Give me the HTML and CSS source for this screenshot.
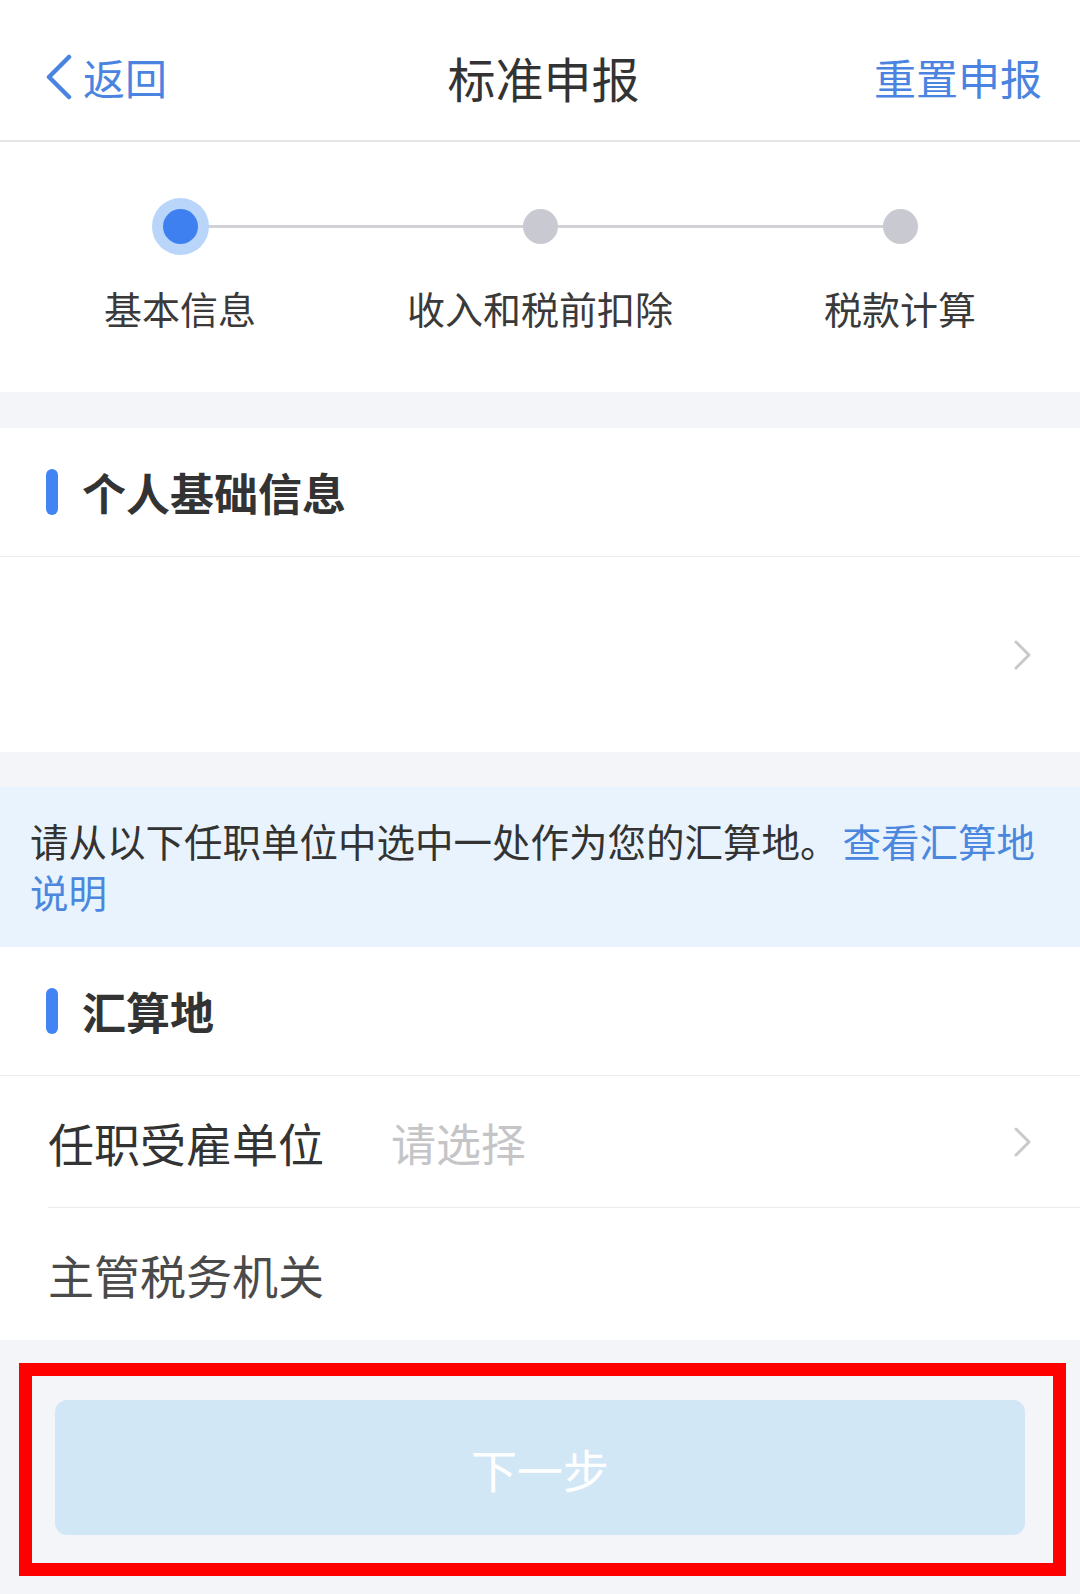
FILE: index.html
```html
<!DOCTYPE html>
<html lang="zh-CN">
<head>
    <meta charset="UTF-8">
    <meta name="viewport" content="width=device-width, initial-scale=1.0">
    <title>标准申报</title>
    <link rel="stylesheet" href="styles.css">
</head>
<body>
    <header class="nav">
        <a class="nav-back" href="#">
            <svg width="28" height="46" viewBox="0 0 28 46"><polyline points="24,3 4,23 24,43" fill="none" stroke="#4a84e0" stroke-width="4.5" stroke-linecap="round" stroke-linejoin="round"/></svg>
            <span>返回</span>
        </a>
        <h1 class="nav-title">标准申报</h1>
        <a class="nav-action" href="#">重置申报</a>
    </header>

    <div class="steps">
        <div class="step active">
            <div class="step-dot"><span></span></div>
            <p>基本信息</p>
        </div>
        <div class="step">
            <div class="step-dot"><span></span></div>
            <p>收入和税前扣除</p>
        </div>
        <div class="step">
            <div class="step-dot"><span></span></div>
            <p>税款计算</p>
        </div>
    </div>

    <section class="card">
        <h2 class="card-title">个人基础信息</h2>
        <div class="row row-empty">
            <svg class="arrow" width="20" height="32" viewBox="0 0 20 32"><polyline points="3,3 16,16 3,29" fill="none" stroke="#c9c9cd" stroke-width="3" stroke-linecap="round" stroke-linejoin="round"/></svg>
        </div>
    </section>

    <div class="notice">
        请从以下任职单位中选中一处作为您的汇算地。<a href="#">查看汇算地说明</a>
    </div>

    <section class="card card-flat">
        <h2 class="card-title">汇算地</h2>
        <div class="row row-line">
            <span class="row-label">任职受雇单位</span>
            <span class="row-value">请选择</span>
            <svg class="arrow" width="20" height="32" viewBox="0 0 20 32"><polyline points="3,3 16,16 3,29" fill="none" stroke="#c9c9cd" stroke-width="3" stroke-linecap="round" stroke-linejoin="round"/></svg>
        </div>
        <div class="row">
            <span class="row-label muted">主管税务机关</span>
        </div>
    </section>

    <div class="footer">
        <div class="highlight">
            <button class="next-btn" disabled>下一步</button>
        </div>
    </div>
</body>
</html>
```

FILE: styles.css
```css
body {
    margin: 0;
    padding: 0;
    background-color: #f4f5f9;
    font-family: "Noto Sans CJK SC", "Noto Sans", sans-serif;
    color: #333;
}

a {
    text-decoration: none;
}

.nav {
    display: grid;
    grid-template-columns: 1fr auto 1fr;
    align-items: center;
    box-sizing: border-box;
    height: 142px;
    padding: 14px 38px 0 45px;
    background: #fff;
    border-bottom: 2px solid #e6e6e8;
}

.nav-back {
    display: flex;
    align-items: center;
    gap: 10px;
    color: #4a84e0;
    font-size: 42px;
    line-height: 1;
}

.nav-back svg {
    display: block;
}

.nav-title {
    margin: 0;
    font-size: 48px;
    font-weight: 400;
    line-height: 1;
    color: #333;
}

.nav-action {
    justify-self: end;
    color: #4a84e0;
    font-size: 42px;
    line-height: 1;
}

.steps {
    display: grid;
    grid-template-columns: repeat(3, 1fr);
    box-sizing: border-box;
    height: 250px;
    padding-top: 56px;
    background: #fff;
}

.step {
    position: relative;
    display: flex;
    flex-direction: column;
    align-items: center;
}

.step:not(:last-child)::after {
    content: "";
    position: absolute;
    top: 27px;
    left: 50%;
    width: 100%;
    height: 3px;
    background: #d2d2d6;
}

.step-dot {
    position: relative;
    z-index: 1;
    display: flex;
    align-items: center;
    justify-content: center;
    width: 57px;
    height: 57px;
}

.step-dot span {
    width: 35px;
    height: 35px;
    border-radius: 50%;
    background: #c9c9d1;
}

.step.active .step-dot {
    border-radius: 50%;
    background: #b9d6fa;
}

.step.active .step-dot span {
    background: #3f80f1;
}

.step p {
    margin: 26px 0 0;
    font-size: 38px;
    line-height: 53px;
    color: #3a3a3a;
}

.card {
    margin-top: 36px;
    background: #fff;
}

.card-flat {
    margin-top: 0;
}

.card-title {
    display: flex;
    align-items: center;
    gap: 24px;
    box-sizing: border-box;
    height: 129px;
    margin: 0;
    padding-left: 46px;
    border-bottom: 1px solid #ebebed;
    font-size: 44px;
    font-weight: 700;
    color: #333;
}

.card-title::before {
    content: "";
    width: 12px;
    height: 46px;
    border-radius: 6px;
    background: #4284f3;
}

.row {
    display: flex;
    align-items: center;
    box-sizing: border-box;
    height: 132px;
    padding: 0 47px 0 48px;
}

.row-empty {
    height: 195px;
    justify-content: flex-end;
}

.row-line {
    position: relative;
}

.row-line::after {
    content: "";
    position: absolute;
    left: 48px;
    right: 0;
    bottom: 0;
    height: 1px;
    background: #ebebed;
}

.row-label {
    width: 343px;
    flex-shrink: 0;
    font-size: 46px;
    color: #333;
}

.row-label.muted {
    color: #4a4a4a;
}

.row-value {
    flex: 1;
    font-size: 45px;
    color: #c5c5c8;
}

.arrow {
    display: block;
    margin-left: auto;
}

.notice {
    margin-top: 35px;
    padding: 28px 30px 30px;
    background: #e8f3fd;
    font-size: 38.5px;
    line-height: 51px;
    color: #333;
}

.notice a {
    margin-left: 4px;
    color: #4b87de;
}

.footer {
    padding: 23px 14px 17px 19px;
}

.highlight {
    padding: 24px 28px 28px 23px;
    border: 13px solid #ff0000;
}

.next-btn {
    display: block;
    width: 100%;
    height: 135px;
    border: none;
    border-radius: 12px;
    background: #d2e7f6;
    color: #fff;
    font-family: inherit;
    font-size: 46px;
}
```
